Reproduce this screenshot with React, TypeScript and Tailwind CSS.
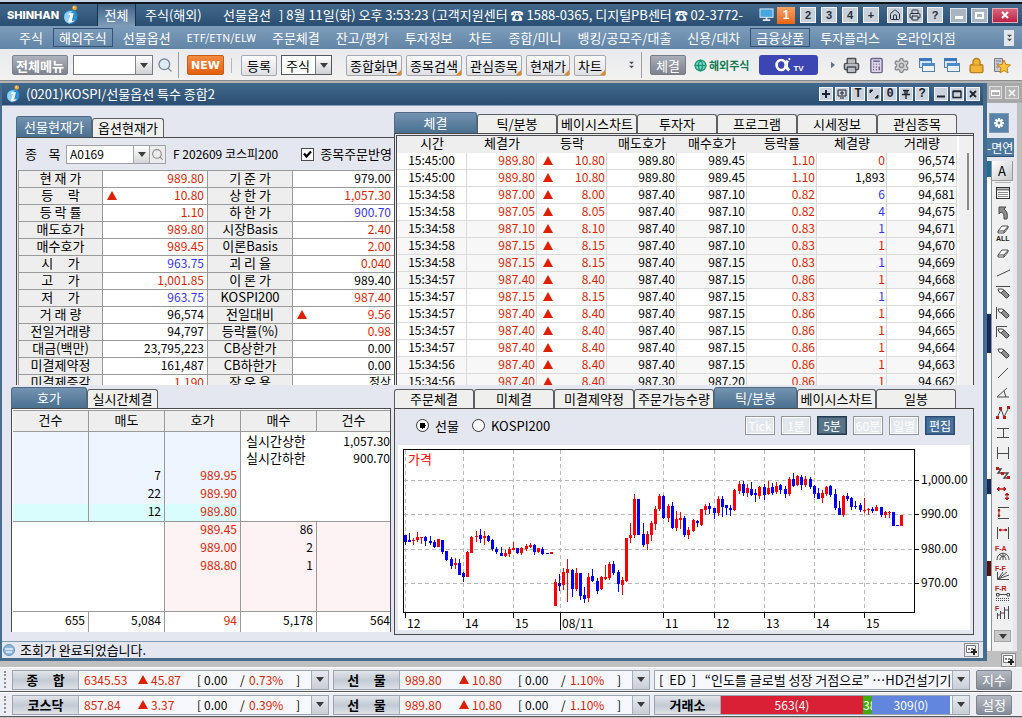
import React from 'react';
import { Printer, Home, Settings, Lock, Calculator, Search, Globe } from 'lucide-react';

type Tone = 'r' | 'b' | 'k';

const tone: Record<Tone, string> = {
  r: 'text-[#e01e00]',
  b: 'text-[#3434ff]',
  k: 'text-black',
};

/* ---------- shared pieces ---------- */

function Up({ className = '' }: { className?: string }) {
  return (
    <svg viewBox="0 0 10 9" className={`h-[9px] w-[10px] shrink-0 ${className}`} aria-hidden="true">
      <path d="M5 0 L10 9 H0 Z" fill="#e01e00" />
    </svg>
  );
}

function Caret() {
  return (
    <svg viewBox="0 0 8 5" className="h-[5px] w-[8px]" aria-hidden="true">
      <path d="M0 0H8L4 5Z" fill="#3c3c3c" />
    </svg>
  );
}

function InfoLogo({ className = '' }: { className?: string }) {
  return (
    <svg viewBox="0 0 18 22" className={`shrink-0 ${className}`} aria-hidden="true">
      <path d="M2 9C4 5 12 4 15 8C18 13 15 20 9 21C3 21 0 15 2 9Z" fill="#2d8fd0" />
      <path d="M2 10C5 6 9 6 11 7C7 10 6 15 8 21C2 20 0 15 2 10Z" fill="#8fd0f4" />
      <path d="M7 9H12L10 17C10 18 11 18 13 17C12 20 6 21 6 18L8 11L6 11Z" fill="#fff" />
      <circle cx="13" cy="3" r="2.7" fill="#eaa83c" />
      <circle cx="12.3" cy="2.3" r="1" fill="#fbe0a0" />
    </svg>
  );
}

function PanelTab({ label, active, className = '' }: { label: string; active?: boolean; className?: string }) {
  return (
    <button
      type="button"
      className={`shrink-0 whitespace-nowrap rounded-t-[3px] border border-b-0 text-center ${
        active
          ? 'h-[21px] border-[#4e6a86] bg-linear-to-b from-[#7393b0] to-[#4a7090] text-white'
          : 'h-[19px] border-[#5c5f66] bg-[#efefed] text-black'
      } ${className}`}
    >
      {label}
    </button>
  );
}

/* ---------- application header ---------- */

const titleBtn =
  'flex h-[16px] w-[16px] shrink-0 items-center justify-center border border-[#f2f4f7] bg-[#c9d0d9] font-["Liberation_Sans"] text-[11px] font-bold text-[#26303c]';

function TitleBar() {
  return (
    <header className="flex h-[24px] shrink-0 items-center border-t-2 border-[#101418] bg-linear-to-b from-[#42698b] to-[#2a4e73] pl-[7px] pr-[4px] text-white">
      <span className="w-[55px] font-['Inter'] text-[11px] font-extrabold">SHINHAN</span>
      <InfoLogo className="ml-[1px] h-[20px] w-[16px]" />
      <button
        type="button"
        className="ml-[18px] h-full w-[39px] border-l border-r border-l-[#16314e] border-r-[#16314e] bg-linear-to-b from-[#3f6285] to-[#7e9cb8]"
      >
        전체
      </button>
      <button type="button" className="ml-[9px] w-[62px] whitespace-nowrap text-left">주식(해외)</button>
      <button type="button" className="ml-[16px] w-[48px] whitespace-nowrap text-left">선물옵션</button>
      <p className="ml-[8px] min-w-0 flex-1 overflow-x-clip whitespace-nowrap">
        ] 8월 11일(화) 오후 3:53:23 (고객지원센터 ☎ 1588-0365, 디지털PB센터 ☎ 02-3772-
      </p>
      <svg viewBox="0 0 16 15" className="mr-[3px] h-[14px] w-[15px] shrink-0" aria-hidden="true">
        <rect x="1" y="1" width="14" height="9" fill="#49a5e0" stroke="#e6eef6" />
        <path d="M7 10h2v2h3v2H4v-2h3z" fill="#dfe6ee" />
      </svg>
      <div className="flex gap-[5px]">
        <button
          type="button"
          className="flex h-[17px] w-[18px] items-center justify-center bg-linear-to-b from-[#f7a15f] to-[#e8670e] font-['Liberation_Sans'] text-[12px] font-bold text-white"
        >
          1
        </button>
        {['2', '3', '4', '+'].map((n) => (
          <button key={n} type="button" className={titleBtn}>{n}</button>
        ))}
      </div>
      <div className="ml-[8px] flex gap-[4px]">
        <button type="button" className={titleBtn} aria-label="홈"><Home size={12} strokeWidth={2} /></button>
        <button type="button" className={titleBtn} aria-label="인쇄"><Printer size={12} strokeWidth={2} /></button>
        <button type="button" className={titleBtn}>?</button>
      </div>
      <div className="ml-[7px] flex gap-[4px]">
        <button type="button" aria-label="최소화" className="flex h-[15px] w-[17px] items-end justify-center border border-[#dfe4ea] bg-[#a9b5c2] pb-[3px]">
          <span className="h-[3px] w-[8px] bg-white" />
        </button>
        <button type="button" aria-label="최대화" className="flex h-[15px] w-[17px] items-center justify-center border border-[#dfe4ea] bg-[#a9b5c2]">
          <span className="h-[7px] w-[9px] border-2 border-white" />
        </button>
        <button type="button" aria-label="닫기" className="flex h-[15px] w-[26px] items-center justify-center border border-[#e8a9b8] bg-linear-to-b from-[#d8647d] to-[#b91f45]">
          <svg viewBox="0 0 8 8" className="h-[8px] w-[8px]"><path d="M1 1L7 7M7 1L1 7" stroke="#fff" strokeWidth="2" /></svg>
        </button>
      </div>
    </header>
  );
}

const menus = ['주식', '해외주식', '선물옵션', 'ETF/ETN/ELW', '주문체결', '잔고/평가', '투자정보', '차트', '종합/미니', '뱅킹/공모주/대출', '신용/대차', '금융상품', '투자플러스', '온라인지점'];

function DoubleChevron() {
  return (
    <svg viewBox="0 0 8 12" className="h-[10px] w-[7px]" aria-hidden="true">
      <path d="M1 2H7L4 5ZM1 7H7L4 10Z" fill="#4a5058" />
    </svg>
  );
}

function MenuBar() {
  return (
    <nav className="flex h-[24px] shrink-0 items-center gap-[4px] border-b border-[#e9edf2] bg-linear-to-b from-[#7d9cba] to-[#6285a6] pl-[13px] pr-[8px] text-white">
      {menus.map((m) => (
        <button
          key={m}
          type="button"
          className={`h-[19px] shrink-0 whitespace-nowrap border px-[5px] leading-[17px] ${
            m === '해외주식' || m === '금융상품' ? 'border-[#36517a]' : 'border-transparent'
          } ${m.startsWith('ETF') ? 'text-[11px]' : ''}`}
        >
          {m}
        </button>
      ))}
      <button type="button" aria-label="더보기" className="ml-auto flex h-[16px] w-[10px] items-center justify-center bg-[#e3e6ea]">
        <DoubleChevron />
      </button>
    </nav>
  );
}

const toolBtn =
  'relative h-[21px] shrink-0 whitespace-nowrap rounded-[2px] border border-[#a5a7ad] bg-linear-to-b from-[#fbfbfc] to-[#dfe0e4] text-center leading-[17px] text-black';

function CornerMark() {
  return (
    <svg viewBox="0 0 5 5" className="absolute bottom-0 right-0 h-[5px] w-[5px]" aria-hidden="true">
      <path d="M5 0V5H0Z" fill="#e88a10" />
    </svg>
  );
}

function WindowsIcon() {
  return (
    <svg viewBox="0 0 17 16" className="h-[16px] w-[17px] shrink-0" aria-hidden="true">
      <rect x="1.500" y="1.500" width="12" height="9" fill="#d6e4f2" stroke="#5b7ea3" />
      <rect x="1" y="1" width="13" height="3" fill="#3f78b5" />
      <rect x="4.500" y="6.500" width="12" height="8" fill="#eaf1f8" stroke="#5b7ea3" />
      <rect x="4" y="6" width="13" height="3" fill="#4c8ac8" />
    </svg>
  );
}

function FavoriteIcon() {
  return (
    <svg viewBox="0 0 18 17" className="h-[17px] w-[18px] shrink-0" aria-hidden="true">
      <path d="M1.500 1.500H9.500V14.500H1.500Z" fill="#c9cbd0" stroke="#7b7e86" />
      <path d="M3 4H8M3 7H6M3 10H6" stroke="#7b7e86" />
      <path d="M11 3L13 7.500L17.500 8L14 11L15 16L11 13.500L7 16L8 11L4.500 8L9 7.500Z" fill="#fbc43a" stroke="#c58318" />
    </svg>
  );
}

function Toolbar() {
  return (
    <div className="flex h-[30px] shrink-0 items-center bg-linear-to-b from-[#e9eaee] to-[#f3f2f1] pl-[12px] pr-[11px]">
      <button type="button" className="h-[20px] w-[56px] shrink-0 rounded-[2px] border border-[#7d828c] bg-linear-to-b from-[#aeb3bc] to-[#7e8490] text-[13px] font-bold leading-[17px] text-white">
        전체메뉴
      </button>
      <div className="ml-[5px] flex h-[20px] w-[80px] shrink-0 border border-[#77797e] bg-white">
        <input aria-label="화면 검색" className="w-0 flex-1 px-1 outline-none" />
        <button type="button" aria-label="최근 화면" className="flex w-[17px] items-center justify-center border-l border-[#85878c] bg-linear-to-b from-white to-[#cfd0d4]"><Caret /></button>
      </div>
      <button type="button" aria-label="검색" className="ml-[4px] shrink-0 text-[#7d8894]"><Search size={16} strokeWidth={2} fill="#dcebf5" /></button>
      <span className="ml-[5px] h-[26px] w-px shrink-0 bg-[#9b9da3]" />
      <button type="button" className="ml-[8px] h-[20px] w-[37px] shrink-0 rounded-[2px] border border-[#c65d12] bg-linear-to-b from-[#f58a3e] to-[#e4600a] font-['DejaVu_Sans'] text-[11px] font-bold leading-[17px] text-white">
        NEW
      </button>
      <span className="ml-[7px] h-[15px] w-px shrink-0 bg-[#b4b6bb]" />
      <button type="button" className={`${toolBtn} ml-[9px] w-[36px]`}>등록</button>
      <div className="relative ml-[4px] h-[20px] w-[51px] shrink-0">
        <select aria-label="등록 구분" className="h-full w-full appearance-none border border-[#55575c] bg-white pl-[4px] leading-[17px] text-black outline-none">
          <option>주식</option>
        </select>
        <span className="pointer-events-none absolute right-px top-px flex h-[18px] w-[16px] items-center justify-center border-l border-[#77797e] bg-linear-to-b from-white to-[#cfd0d4]"><Caret /></span>
      </div>
      <div className="ml-[14px] flex shrink-0 gap-[4px]">
        <button type="button" className={`${toolBtn} w-[56px]`}>종합화면<CornerMark /></button>
        <button type="button" className={`${toolBtn} w-[56px]`}>종목검색<CornerMark /></button>
        <button type="button" className={`${toolBtn} w-[56px]`}>관심종목<CornerMark /></button>
        <button type="button" className={`${toolBtn} w-[44px]`}>현재가<CornerMark /></button>
        <button type="button" className={`${toolBtn} w-[32px]`}>차트<CornerMark /></button>
      </div>
      <button type="button" aria-label="도구 더보기" className="ml-[22px] shrink-0"><DoubleChevron /></button>
      <span className="ml-[6px] h-[26px] w-px shrink-0 bg-[#9b9da3]" />
      <button type="button" className="ml-[8px] h-[20px] w-[36px] shrink-0 rounded-[2px] border border-[#767b85] bg-linear-to-b from-[#a9aeb8] to-[#7c828e] leading-[17px] text-white">체결</button>
      <a href="#overseas" className="ml-[8px] flex w-[56px] shrink-0 items-center gap-[2px] whitespace-nowrap text-[#117a50]">
        <Globe size={13} strokeWidth={2.4} fill="#7fd0e8" className="shrink-0 text-[#1c9a63]" />
        <span className="text-[11px] font-bold">해외주식</span>
      </a>
      <a href="#tv" className="ml-[9px] flex h-[20px] w-[59px] shrink-0 items-center justify-center rounded-[3px] bg-[#3c45b4] text-white">
        <svg viewBox="0 0 22 16" className="h-[16px] w-[20px]" aria-hidden="true">
          <ellipse cx="9" cy="8" rx="5" ry="5.500" fill="none" stroke="#fff" strokeWidth="3" />
          <path d="M16 3C14 8 15 12 18 14" fill="none" stroke="#fff" strokeWidth="3" />
          <circle cx="18" cy="1.500" r="1.200" fill="#fff" />
        </svg>
        <span className="self-end pb-[2px] font-['Liberation_Sans'] text-[8px] font-bold leading-none">TV</span>
      </a>
      <svg viewBox="0 0 5 8" className="ml-[13px] h-[8px] w-[4px] shrink-0" aria-hidden="true"><path d="M0 0L5 4L0 8Z" fill="#5f6f85" /></svg>
      <div className="ml-auto flex shrink-0 items-center gap-[8px] pl-[7px]">
        <Printer size={17} fill="#b7bcc2" className="text-[#4b4f55]" />
        <Calculator size={17} fill="#ddd3ea" className="text-[#6d6788]" />
        <Settings size={17} fill="#d0d1d3" className="text-[#8c8d90]" />
        <WindowsIcon />
        <WindowsIcon />
        <Lock size={17} fill="#f0b437" className="text-[#b98217]" />
        <FavoriteIcon />
      </div>
    </div>
  );
}

/* ---------- current price panel ---------- */

type Info = [string, string, Tone, string, string, Tone];

const info: Info[] = [
  ['현 재 가', '989.80', 'r', '기 준 가', '979.00', 'k'],
  ['등     락', '10.80', 'r', '상 한 가', '1,057.30', 'r'],
  ['등 락 률', '1.10', 'r', '하 한 가', '900.70', 'b'],
  ['매도호가', '989.80', 'r', '시장Basis', '2.40', 'r'],
  ['매수호가', '989.45', 'r', '이론Basis', '2.00', 'r'],
  ['시     가', '963.75', 'b', '괴 리 율', '0.040', 'r'],
  ['고     가', '1,001.85', 'r', '이 론 가', '989.40', 'k'],
  ['저     가', '963.75', 'b', 'KOSPI200', '987.40', 'r'],
  ['거 래 량', '96,574', 'k', '전일대비', '9.56', 'r'],
  ['전일거래량', '94,797', 'k', '등락률(%)', '0.98', 'r'],
  ['대금(백만)', '23,795,223', 'k', 'CB상한가', '0.00', 'k'],
  ['미결제약정', '161,487', 'k', 'CB하한가', '0.00', 'k'],
  ['미결제증감', '1,190', 'r', '장 운 용', '정상', 'k'],
];

const infoLabel = 'h-[17px] whitespace-pre border-b border-r border-[#9a9a9a] bg-[#eeeeee] p-0 text-center align-top font-normal';
const infoValue = 'h-[17px] border-b border-r border-[#9a9a9a] bg-white p-0 pr-[3px] align-top text-[12px]';

function ValueCell({ value, color, mark, last }: { value: string; color: Tone; mark?: boolean; last?: boolean }) {
  return (
    <td className={last ? `${infoValue} border-r-0 pr-0` : infoValue}>
      <div className={`flex items-center justify-end ${tone[color]}`}>
        {mark && <Up className="ml-[4px] mr-auto" />}
        {value}
      </div>
    </td>
  );
}

function PricePanel() {
  return (
    <section className="ml-[14px]">
      <div className="flex h-[21px] items-end">
        <PanelTab label="선물현재가" active className="w-[76px]" />
        <PanelTab label="옵션현재가" className="w-[72px]" />
      </div>
      <div className="border-l border-t border-[#4a4a4a] pl-px">
        <form className="flex h-[32px] items-center pl-[7px]">
          <label htmlFor="code" className="w-[41px] whitespace-pre">종    목</label>
          <div className="flex h-[19px] w-[100px] shrink-0 border border-[#a0a2a8] bg-white">
            <input id="code" defaultValue="A0169" className="w-0 flex-1 px-[3px] text-[12px] text-black outline-none" />
            <button type="button" aria-label="종목 목록" className="flex w-[16px] items-center justify-center border-l border-[#a0a2a8] bg-linear-to-b from-white to-[#d3d4d8]"><Caret /></button>
            <button type="button" aria-label="종목 찾기" className="flex w-[16px] items-center justify-center border-l border-[#a0a2a8] bg-[#ececec] text-[#8a8a8a]"><Search size={13} /></button>
          </div>
          <span className="ml-[7px] flex-1 whitespace-nowrap text-[12px]">F 202609 코스피200</span>
          <label className="flex shrink-0 items-center gap-[6px] whitespace-nowrap pr-[2px]">
            <span className="relative flex h-[13px] w-[13px]">
              <input type="checkbox" defaultChecked className="peer h-[13px] w-[13px] appearance-none border border-[#4a4a4a] bg-white" />
              <svg viewBox="0 0 9 9" className="pointer-events-none absolute left-[2px] top-[2px] hidden h-[9px] w-[9px] peer-checked:block" aria-hidden="true">
                <path d="M1 3.500L3.500 6.500L8 1.500" fill="none" stroke="#000" strokeWidth="2.200" />
              </svg>
            </span>
            종목주문반영
          </label>
        </form>
        <div className="h-[215px] overflow-hidden">
          <table className="w-full table-fixed border-separate border-spacing-0 border-l border-t border-[#9a9a9a] leading-[14px]">
            <colgroup>
              <col className="w-[84px]" />
              <col className="w-[105px]" />
              <col className="w-[85px]" />
              <col />
            </colgroup>
            <tbody>
              {info.map((r, i) => (
                <tr key={r[0]}>
                  <th scope="row" className={infoLabel}>{r[0]}</th>
                  <ValueCell value={r[1]} color={r[2]} mark={i === 1} />
                  <th scope="row" className={infoLabel}>{r[3]}</th>
                  <ValueCell value={r[4]} color={r[5]} mark={i === 8} last />
                </tr>
              ))}
            </tbody>
          </table>
        </div>
      </div>
    </section>
  );
}

/* ---------- order book ---------- */

const asks: [string, string][] = [['', ''], ['', ''], ['7', '989.95'], ['22', '989.90'], ['12', '989.80']];
const bids: [string, string][] = [['989.45', '86'], ['989.00', '2'], ['988.80', '1'], ['', ''], ['', '']];

function OrderBook() {
  const line = 'border-[#9a9a9a]';
  return (
    <section className="ml-[9px] mr-[3px]">
      <div className="flex h-[21px] items-end">
        <PanelTab label="호가" active className="w-[76px]" />
        <PanelTab label="실시간체결" className="w-[71px]" />
      </div>
      <div className="border-l border-r border-t border-[#4a4a4a] bg-white pl-px pt-px">
        <table className="w-full table-fixed border-separate border-spacing-0 text-[12px] leading-[14px]">
          <colgroup>
            <col className="w-[76px]" /><col className="w-[76px]" /><col className="w-[76px]" /><col className="w-[76px]" /><col />
          </colgroup>
          <thead>
            <tr>
              {['건수', '매도', '호가', '매수', '건수'].map((h, i) => (
                <th key={i} className={`h-[22px] border-b border-t ${line} bg-[#eeeeee] p-0 pb-[3px] text-[13px] font-normal ${i < 4 ? 'border-r' : ''}`}>{h}</th>
              ))}
            </tr>
          </thead>
          <tbody className="align-top">
            {asks.map(([qty, price], i) => {
              const bg = i === 4 ? 'bg-[#d9fcfc] border-b' : 'bg-[#edf5ff]';
              return (
                <tr key={`a${i}`}>
                  <td className={`h-[18px] border-r ${line} ${bg} p-0`} />
                  <td className={`border-r ${line} ${bg} p-0 pr-[3px] text-right`}>{qty}</td>
                  <td className={`border-r ${line} ${bg} p-0 pr-[3px] text-right text-[#e01e00]`}>{price}</td>
                  {i === 0 && (
                    <td colSpan={2} rowSpan={5} className={`border-b ${line} bg-white p-0 pl-[5px] pt-[2px]`}>
                      <dl className="grid grid-cols-[auto_auto] justify-between gap-y-[3px]">
                        <dt className="text-[13px]">실시간상한</dt><dd className="text-right">1,057.30</dd>
                        <dt className="text-[13px]">실시간하한</dt><dd className="text-right">900.70</dd>
                      </dl>
                    </td>
                  )}
                </tr>
              );
            })}
            {bids.map(([price, qty], i) => {
              const bg = i === 4 ? 'bg-[#fdf2f4] border-b' : 'bg-[#fdf2f4]';
              return (
                <tr key={`b${i}`}>
                  {i === 0 && <td colSpan={2} rowSpan={5} className={`border-b border-r ${line} bg-white p-0`} />}
                  <td className={`h-[18px] border-r ${line} ${bg} p-0 pr-[3px] text-right text-[#e01e00]`}>{price}</td>
                  <td className={`border-r ${line} ${bg} p-0 pr-[3px] text-right`}>{qty}</td>
                  <td className={`${line} ${bg} p-0`} />
                </tr>
              );
            })}
            <tr>
              {['655', '5,084', '94', '5,178', '564'].map((v, i) => (
                <td key={v} className={`h-[20px] ${line} p-0 pt-px text-right ${i < 4 ? 'border-r pr-[3px]' : ''} ${i === 2 ? 'text-[#e01e00]' : ''}`}>{v}</td>
              ))}
            </tr>
          </tbody>
        </table>
      </div>
    </section>
  );
}

/* ---------- execution list ---------- */

type Trade = [string, string, string, string, string, string, string, Tone, string];

const trades: Trade[] = [
  ['15:45:00', '989.80', '10.80', '989.80', '989.45', '1.10', '0', 'r', '96,574'],
  ['15:45:00', '989.80', '10.80', '989.80', '989.45', '1.10', '1,893', 'k', '96,574'],
  ['15:34:58', '987.00', '8.00', '987.40', '987.10', '0.82', '6', 'b', '94,681'],
  ['15:34:58', '987.05', '8.05', '987.40', '987.10', '0.82', '4', 'b', '94,675'],
  ['15:34:58', '987.10', '8.10', '987.40', '987.10', '0.83', '1', 'b', '94,671'],
  ['15:34:58', '987.15', '8.15', '987.40', '987.10', '0.83', '1', 'r', '94,670'],
  ['15:34:58', '987.15', '8.15', '987.40', '987.15', '0.83', '1', 'b', '94,669'],
  ['15:34:57', '987.40', '8.40', '987.40', '987.15', '0.86', '1', 'r', '94,668'],
  ['15:34:57', '987.15', '8.15', '987.40', '987.15', '0.83', '1', 'b', '94,667'],
  ['15:34:57', '987.40', '8.40', '987.40', '987.15', '0.86', '1', 'r', '94,666'],
  ['15:34:57', '987.40', '8.40', '987.40', '987.15', '0.86', '1', 'r', '94,665'],
  ['15:34:57', '987.40', '8.40', '987.40', '987.15', '0.86', '1', 'r', '94,664'],
  ['15:34:56', '987.40', '8.40', '987.40', '987.15', '0.86', '1', 'r', '94,663'],
  ['15:34:56', '987.40', '8.40', '987.30', '987.20', '0.86', '1', 'r', '94,662'],
];

const upperTabs = ['틱/분봉', '베이시스차트', '투자자', '프로그램', '시세정보', '관심종목'];

function TradePanel() {
  const base = 'h-[17px] border-b border-r border-[#dadada] p-0 align-top';
  const cell = `${base} pr-px text-right`;
  return (
    <section>
      <div className="flex h-[21px] items-end">
        <PanelTab label="체결" active className="w-[83px]" />
        {upperTabs.map((t) => (
          <PanelTab key={t} label={t} className="w-[80px]" />
        ))}
      </div>
      <div className="border-l border-r border-t border-[#4a4a4a] pl-px pt-px">
        <div className="flex h-[250px] overflow-hidden border-l border-t border-[#4a4a4a] bg-[#f0f0f0]">
          <div className="min-w-0 flex-1">
            <table className="w-full table-fixed border-separate border-spacing-0 text-[12px] leading-[14px]">
              <thead>
                <tr>
                  {['시간', '체결가', '등락', '매도호가', '매수호가', '등락률', '체결량', '거래량'].map((h) => (
                    <th key={h} className="h-[17px] bg-[#eeeeee] p-0 align-top text-[13px] font-normal">{h}</th>
                  ))}
                </tr>
              </thead>
              <tbody>
                {trades.map((t, i) => (
                  <tr key={i} className={Math.floor(i / 4) % 2 === 0 ? 'bg-white' : 'bg-[#f7f7f7]'}>
                    <td className={`${base} text-center`}>{t[0]}</td>
                    <td className={`${cell} text-[#e01e00]`}>{t[1]}</td>
                    <td className={cell}>
                      <div className="flex items-center justify-between pl-[6px] text-[#e01e00]"><Up />{t[2]}</div>
                    </td>
                    <td className={cell}>{t[3]}</td>
                    <td className={cell}>{t[4]}</td>
                    <td className={`${cell} text-[#e01e00]`}>{t[5]}</td>
                    <td className={`${cell} ${tone[t[7]]}`}>{t[6]}</td>
                    <td className={cell}>{t[8]}</td>
                  </tr>
                ))}
              </tbody>
            </table>
          </div>
          <div className="flex w-[16px] shrink-0 justify-end border-l-2 border-white pr-[4px] pt-[17px]">
            <span className="h-[57px] w-[2px] bg-[#8a8a8a]" />
          </div>
        </div>
      </div>
    </section>
  );
}

/* ---------- candle chart ---------- */

// [x, high, bodyTop, bodyBottom, low, rising] on a grid three times finer than a pixel
type Candle = [number, number, number, number, number, 0 | 1];

const candles: Candle[] = [
  [22, 270, 270, 290, 300, 0], [34, 264, 285, 291, 291, 0], [46, 280, 285, 289, 300, 1], [58, 261, 276, 285, 291, 1],
  [70, 276, 276, 279, 297, 1], [82, 273, 276, 288, 303, 0], [97, 273, 288, 294, 300, 0], [109, 285, 291, 306, 309, 0],
  [121, 282, 282, 306, 306, 1], [133, 285, 285, 321, 327, 0], [145, 318, 318, 345, 348, 0], [160, 336, 342, 363, 372, 0],
  [172, 339, 354, 360, 372, 1], [184, 342, 354, 390, 390, 0], [196, 380, 384, 396, 411, 0], [208, 318, 321, 396, 396, 1],
  [220, 273, 276, 324, 324, 1], [235, 258, 273, 276, 291, 1], [247, 252, 270, 282, 294, 0], [259, 258, 273, 279, 300, 1],
  [271, 270, 273, 288, 291, 0], [283, 282, 285, 312, 318, 0], [295, 306, 312, 321, 327, 0], [310, 306, 324, 333, 333, 0],
  [322, 315, 324, 333, 336, 1], [334, 306, 312, 327, 336, 1], [346, 291, 309, 315, 315, 1], [358, 309, 309, 324, 327, 0],
  [370, 306, 309, 324, 330, 1], [385, 297, 303, 312, 318, 1], [397, 294, 300, 306, 309, 1], [409, 297, 300, 321, 330, 0],
  [421, 309, 309, 321, 324, 1], [433, 306, 312, 327, 330, 0], [448, 324, 324, 327, 327, 0], [460, 321, 321, 327, 327, 1],
  [472, 402, 411, 483, 483, 1], [484, 387, 414, 423, 438, 0], [496, 369, 381, 420, 435, 1], [508, 342, 372, 384, 471, 1],
  [523, 372, 375, 432, 456, 0], [535, 370, 384, 432, 438, 1], [547, 384, 384, 453, 465, 0], [559, 426, 450, 462, 474, 0],
  [571, 384, 396, 459, 471, 1], [583, 372, 393, 408, 411, 0], [598, 399, 408, 438, 447, 0], [610, 393, 396, 432, 435, 1],
  [622, 360, 396, 402, 405, 1], [634, 351, 357, 399, 405, 1], [646, 348, 357, 384, 390, 0], [661, 375, 381, 417, 441, 0],
  [673, 396, 405, 420, 450, 1], [685, 279, 279, 408, 411, 1], [697, 234, 270, 279, 294, 1], [709, 147, 162, 270, 279, 1],
  [721, 162, 162, 270, 270, 0], [736, 234, 267, 300, 306, 0], [748, 258, 267, 297, 315, 1], [760, 228, 234, 270, 288, 1],
  [772, 183, 192, 237, 255, 1], [784, 147, 153, 192, 198, 1], [796, 150, 153, 219, 222, 0], [811, 177, 183, 219, 231, 1],
  [823, 171, 183, 249, 252, 0], [835, 198, 222, 249, 258, 1], [847, 201, 219, 225, 252, 1], [859, 213, 219, 270, 276, 0],
  [871, 246, 255, 270, 282, 1], [886, 222, 225, 258, 261, 1], [898, 225, 228, 234, 246, 0], [910, 192, 192, 240, 243, 1],
  [922, 177, 183, 195, 210, 1], [934, 174, 183, 192, 207, 0], [949, 189, 189, 204, 222, 0], [961, 153, 162, 204, 213, 1],
  [973, 153, 162, 186, 216, 0], [985, 180, 180, 189, 210, 0], [997, 180, 189, 195, 213, 0], [1009, 132, 135, 195, 198, 1],
  [1024, 108, 117, 138, 147, 1], [1036, 108, 117, 144, 153, 0], [1048, 117, 129, 144, 156, 1], [1060, 111, 132, 150, 153, 0],
  [1072, 132, 144, 150, 171, 0], [1084, 123, 126, 153, 162, 1], [1099, 117, 126, 150, 165, 0], [1111, 108, 129, 147, 150, 1],
  [1123, 114, 126, 144, 150, 0], [1135, 111, 123, 141, 147, 1], [1147, 117, 120, 135, 147, 0], [1162, 123, 132, 147, 159, 0],
  [1174, 96, 102, 147, 153, 1], [1186, 84, 102, 123, 126, 0], [1198, 90, 93, 120, 123, 1], [1210, 90, 96, 120, 135, 0],
  [1222, 93, 102, 120, 126, 1], [1237, 96, 102, 126, 132, 0], [1249, 120, 123, 147, 159, 0], [1261, 129, 144, 162, 162, 0],
  [1273, 135, 144, 159, 174, 1], [1285, 123, 126, 147, 153, 1], [1297, 120, 123, 150, 156, 0], [1312, 132, 147, 189, 195, 0],
  [1324, 168, 189, 210, 210, 0], [1336, 150, 153, 210, 216, 1], [1348, 144, 153, 162, 168, 0], [1360, 156, 159, 186, 195, 0],
  [1372, 168, 183, 186, 192, 0], [1387, 174, 180, 195, 201, 0], [1399, 159, 195, 198, 204, 1], [1411, 189, 192, 195, 210, 1],
  [1423, 186, 192, 198, 204, 0], [1435, 180, 186, 198, 198, 1], [1450, 186, 186, 210, 216, 0], [1462, 198, 201, 210, 219, 1],
  [1474, 198, 201, 204, 219, 1], [1486, 201, 201, 243, 243, 0], [1498, 240, 240, 243, 243, 0], [1510, 210, 210, 243, 243, 1],
];

const priceTicks: [number, string][] = [[35, '1,000.00'], [69, '990.00'], [104, '980.00'], [138, '970.00']];
const timeTicks: [number, string][] = [[7, '12'], [65, '14'], [115, '15'], [162, '08/11'], [265, '11'], [316, '12'], [366, '13'], [416, '14'], [466, '15']];

function CandleChart() {
  return (
    <svg viewBox="0 0 571 185" className="block h-[185px] w-[571px] text-[12px]" role="img" aria-label="가격 5분봉 차트">
      <g shapeRendering="crispEdges">
        {priceTicks.map(([y]) => (
          <g key={y}>
            <path d={`M6 ${y + 0.5}H516`} stroke="#b8b8b8" strokeDasharray="4 3" />
            <path d={`M517 ${y + 0.5}H521`} stroke="#000" />
          </g>
        ))}
        {timeTicks.map(([x, label]) => (
          <g key={x}>
            <path d={`M${x + 0.5} 5V167`} stroke="#b8b8b8" strokeDasharray="4 3" />
            <path d={`M${x + 0.5} 168V${label === '08/11' ? 185 : 173}`} stroke="#000" />
          </g>
        ))}
        {candles.map(([x, hi, top, bottom, lo, up]) => {
          const col = Math.floor(x / 3);
          const y1 = Math.round(top / 3);
          const w1 = Math.round(hi / 3);
          return (
            <g key={x} fill={up ? '#ff0000' : '#0000ff'}>
              <rect x={col} y={w1} width={1} height={Math.max(1, Math.round(lo / 3) - w1)} />
              <rect x={col - 1} y={y1} width={3} height={Math.max(1, Math.round(bottom / 3) - y1)} />
            </g>
          );
        })}
        <rect x="5.500" y="4.500" width="511" height="163" fill="none" stroke="#000" />
      </g>
      <text x="10" y="19" fill="#ff0000" className="text-[13px]">가격</text>
      {priceTicks.map(([y, label]) => <text key={y} x="523" y={y + 4}>{label}</text>)}
      {timeTicks.map(([x, label]) => <text key={x} x={x + 2} y="183">{label}</text>)}
    </svg>
  );
}

const intervals: [string, 'off' | 'on' | 'edit'][] = [['Tick', 'off'], ['1분', 'off'], ['5분', 'on'], ['60분', 'off'], ['일별', 'off'], ['편집', 'edit']];
const intervalStyle = {
  off: 'border-[#92959b] bg-[#e2e6ed] text-white shadow-[inset_0_0_0_1px_#fff]',
  on: 'border-[#243c50] bg-[#587486] text-white shadow-[inset_0_0_0_1px_#3c5668]',
  edit: 'border-[#2b4a72] bg-[#477199] text-white shadow-[inset_0_0_0_1px_#3a6088]',
};

function Radio({ label, checked }: { label: string; checked?: boolean }) {
  return (
    <label className="flex items-center gap-[6px]">
      <input
        type="radio"
        name="underlying"
        defaultChecked={checked}
        className="h-[13px] w-[13px] appearance-none rounded-full border border-[#333] bg-white checked:bg-[radial-gradient(circle,#000_0_3px,#fff_3px)]"
      />
      {label}
    </label>
  );
}

function ChartPanel() {
  return (
    <section>
      <div className="flex h-[21px] items-end">
        {['주문체결', '미체결', '미결제약정', '주문가능수량'].map((t) => (
          <PanelTab key={t} label={t} className="w-[80px]" />
        ))}
        <PanelTab label="틱/분봉" active className="w-[83px]" />
        <PanelTab label="베이시스차트" className="w-[79px]" />
        <PanelTab label="일봉" className="w-[80px]" />
      </div>
      <div className="border border-[#4a4a4a] px-[3px] pb-[4px]">
        <div className="flex h-[36px] items-center pb-[3px] pr-[15px]">
          <fieldset className="ml-[18px] flex flex-1 gap-[13px]">
            <Radio label="선물" checked />
            <Radio label="KOSPI200" />
          </fieldset>
          <div className="flex gap-[6px]">
            {intervals.map(([t, s]) => (
              <button key={t} type="button" className={`h-[19px] w-[30px] whitespace-nowrap border text-[12px] leading-[16px] ${intervalStyle[s]}`}>{t}</button>
            ))}
          </div>
        </div>
        <div className="bg-white">
          <CandleChart />
        </div>
      </div>
    </section>
  );
}

/* ---------- child window ---------- */

const winBtn =
  'flex h-[14px] w-[14px] shrink-0 items-center justify-center border border-[#f2f4f7] bg-[#cdd3dc] font-["Liberation_Mono"] text-[12px] font-bold leading-none text-[#1c242e]';

function Glyph({ d, fill = 'none', w = 1.4 }: { d: string; fill?: string; w?: number }) {
  return (
    <svg viewBox="0 0 10 10" className="h-[10px] w-[10px]" aria-hidden="true">
      <path d={d} fill={fill} stroke="currentColor" strokeWidth={w} />
    </svg>
  );
}

function WindowTitle() {
  return (
    <div className="flex h-[23px] items-center border-b border-[#86a0ba] bg-linear-to-b from-[#42698b] to-[#2a4e73] pl-[4px] pr-[3px] text-white">
      <InfoLogo className="h-[18px] w-[15px]" />
      <h1 className="ml-[5px] flex-1 whitespace-nowrap">(0201)KOSPI/선물옵션 특수 종합2</h1>
      <div className="flex gap-[2px]">
        <button type="button" aria-label="추가" className={winBtn}><Glyph d="M5 1V9M1 5H9" w={2} /></button>
        <button type="button" aria-label="화면 추가" className={winBtn}><Glyph d="M1 1H9V7H1ZM5 2V6M3 4H7M3 9H7" w={1} /></button>
        <button type="button" className={winBtn}>T</button>
        <button type="button" aria-label="크기 조절" className={winBtn}><Glyph d="M1 4V1H4ZM9 6V9H6Z" fill="currentColor" w={1} /></button>
        <button type="button" className={winBtn}>0</button>
        <button type="button" aria-label="고정" className={winBtn}><Glyph d="M2 1.500H8M4 2V5M6 2V5M1 5.500H9M5 6V10" w={1.4} /></button>
        <button type="button" className={winBtn}>?</button>
      </div>
      <div className="ml-[5px] flex gap-[2px]">
        <button type="button" aria-label="창 최소화" className={winBtn}><Glyph d="M1 7.500H9" w={2} /></button>
        <button type="button" aria-label="창 최대화" className={winBtn}><Glyph d="M1 2.500H9V8.500H1ZM1 2H9" w={1.4} /></button>
        <button type="button" aria-label="창 닫기" className={winBtn}><Glyph d="M2 2L8 8M8 2L2 8" w={1.8} /></button>
      </div>
    </div>
  );
}

function AddPane() {
  return (
    <button type="button" aria-label="화면 분할" className="flex h-[14px] w-[15px] items-center justify-center border border-[#8c8c8c] bg-[#ececec]">
      <svg viewBox="0 0 11 10" className="h-[10px] w-[11px]">
        <path d="M.500 .500H9.500V7.500H.500Z" fill="#fff" stroke="#777" />
        <path d="M2 4H4M5 4H7" stroke="#555" strokeWidth="1.500" />
        <path d="M8 4V10M5 7H11" stroke="#222" strokeWidth="2" />
      </svg>
    </button>
  );
}

function MainWindow() {
  return (
    <div className="min-w-0 flex-1 border-b-[3px] border-l-2 border-r-4 border-[#466c8e] bg-[#e4e7ef]">
      <WindowTitle />
      <main className="flex">
        <div className="w-[392px] shrink-0 pt-[10px]">
          <PricePanel />
          <div className="h-[2px]" />
          <OrderBook />
        </div>
        <div className="min-w-0 flex-1 pb-[6px] pr-[9px] pt-[6px]">
          <TradePanel />
          <div className="h-[2px]" />
          <ChartPanel />
        </div>
      </main>
      <footer className="flex h-[17px] items-center border-t border-[#7f9ab4] pl-[1px] pr-[4px]">
        <svg viewBox="0 0 12 12" className="h-[12px] w-[12px]" aria-hidden="true">
          <circle cx="6" cy="6" r="5.500" fill="#8fb6de" stroke="#6f92b5" />
          <path d="M2 5H10M3 8H9" stroke="#e6f1fb" strokeWidth="1.500" />
        </svg>
        <p className="ml-[5px] flex-1 leading-[14px]">조회가 완료되었습니다.</p>
        <AddPane />
      </footer>
    </div>
  );
}

/* ---------- drawing tool rail ---------- */

const dark = '#4a4a4a';
const red = '#c01818';

function Pencil({ children }: { children?: React.ReactNode }) {
  return (
    <>
      <path d="M6 8L9 5L14 10V11L12 13H11Z" fill="#8c8c8c" stroke={dark} />
      <path d="M3 4L7 4L9 5L6 8L4 7Z" fill="#f4f4f4" stroke={dark} />
      {children}
    </>
  );
}

const tools: React.ReactNode[] = [
  <g key="list"><rect x="1.500" y="2.500" width="13" height="11" fill="#fff" stroke="#333" /><path d="M2 4.500H14" stroke="#777" strokeWidth="2" /><path d="M3 7.500H13M3 9.500H13M3 11.500H13" stroke="#888" /></g>,
  <path key="undo" d="M4 2V9L6 7C9 8 9 10 9 14H12C13 9 12 6 9 4L11 2Z" fill="#8c8c8c" stroke={dark} />,
  <g key="all"><path d="M3 6L7 1H13L13 3L9 8H3ZM3 6H9L13 1.500M9 6V8" fill="#fff" stroke={dark} /><text x="1" y="16" fontSize="7" fontWeight="bold" fill="#222">ALL</text></g>,
  <path key="erase" d="M3 10L7 5H13V7L9 12H3ZM3 10H9L13 5.500M9 10V12" fill="#fff" stroke={dark} />,
  <path key="line" d="M2 11L15 5" stroke={dark} />,
  <Pencil key="p1"><path d="M1 1.500H15" stroke={dark} /></Pencil>,
  <Pencil key="p2"><path d="M1.500 2V14" stroke={dark} /></Pencil>,
  <Pencil key="p3"><path d="M1.500 12V1.500H12" stroke={dark} /></Pencil>,
  <Pencil key="p4" />,
  <path key="line2" d="M3 13L13 3" stroke={dark} />,
  <path key="angle" d="M12 3L2 12H14M9 6L11 12" fill="none" stroke={dark} />,
  <g key="n"><path d="M2 13L6 4L9 12L14 2" fill="none" stroke={dark} /><path d="M1 11H4V14H1ZM4 2H7V5H4ZM8 11H11V14H8ZM12 1H15V4H12Z" fill={red} /></g>,
  <path key="I" d="M2 3.500H14M2 12.500H14M8.500 3V12" stroke={dark} />,
  <path key="H" d="M2.500 2V14M13.500 2V14M3 8.500H13" stroke={dark} />,
  <g key="z"><path d="M2 4H6L3 8H7M8 8H13L9 13H14" fill="none" stroke={dark} strokeWidth="1.400" /><path d="M1 2H4V5H1ZM6 7H9V10H6ZM12 11H15V14H12Z" fill={red} /></g>,
  <g key="arr" stroke={red} fill={red}><path d="M2 4H11" strokeWidth="1.500" /><path d="M4 2L2 4L4 6ZM9 2L11 4L9 6ZM12 8V14M10 10L12 8L14 10ZM10 13L12 15L14 13Z" /></g>,
  <g key="v"><path d="M3 2.500H14M3 13.500H14" stroke={dark} /><path d="M4 4V12M3 6L4 4L5 6ZM3 10L4 12L5 10Z" fill={red} stroke={red} /></g>,
  <g key="h"><path d="M2.500 2V14M13.500 2V14" stroke={dark} /><path d="M4 5H12M6 4L4 5L6 6ZM10 4L12 5L10 6Z" fill={red} stroke={red} /></g>,
  <g key="fa"><text x="0" y="6" fontSize="7" fontWeight="bold" fill={red}>F-A</text><path d="M2 15C2 6 14 6 14 15M5 15C5 10 11 10 11 15M8 8V15M8 12L4 9M8 12L12 9" fill="none" stroke={dark} /></g>,
  <g key="ff"><text x="0" y="6" fontSize="7" fontWeight="bold" fill={red}>F-F</text><path d="M2.500 7V14.500H14M3 14L12 7M3 14L14 10M3 14L8 7" fill="none" stroke={dark} /></g>,
  <g key="fr"><text x="0" y="6" fontSize="7" fontWeight="bold" fill={red}>F-R</text><path d="M3 9.500H13" stroke={dark} /><path d="M1.500 8.500H4V11H1.500ZM12 8.500H14.500V11H12Z" fill="#fff" stroke={dark} /><path d="M1 13.500H15M1 15.500H15" stroke={dark} strokeDasharray="1 1" /></g>,
  <g key="f"><text x="0" y="6" fontSize="7" fontWeight="bold" fill={red}>F</text><path d="M2.500 8V14M5.500 6V14M9.500 2V14M13.500 1V14M2 10H5M6 8H9M10 5H13" stroke={dark} /></g>,
];

function ToolRail() {
  return (
    <aside className="flex w-[35px] shrink-0 flex-col bg-[#c0c0c0]">
      <div className="flex h-[20px] gap-[3px] bg-[#a8a8a8] pl-[2px] pt-[3px]">
        <button type="button" aria-label="뒤 창 최대화" className="flex h-[13px] w-[13px] items-center justify-center border border-[#ddd] bg-[#b4b4b4]">
          <span className="h-[6px] w-[9px] border border-t-2 border-white" />
        </button>
        <button type="button" aria-label="뒤 창 닫기" className="flex h-[13px] w-[14px] items-center justify-center border border-[#ddd] bg-[#b4b4b4] text-white">
          <Glyph d="M2 2L8 8M8 2L2 8" w={1.6} />
        </button>
      </div>
      <div className="mr-[5px] flex flex-1 flex-col bg-[#e4e7ef]">
        <button type="button" aria-label="설정" className="ml-[2px] mt-[10px] flex h-[20px] w-[20px] items-center justify-center border border-[#7f9ab6] bg-[#5a84a9]">
          <svg viewBox="0 0 12 12" className="h-[12px] w-[12px]" aria-hidden="true">
            <path d="M6 1V11M1 6H11M2.500 2.500L9.500 9.500M9.500 2.500L2.500 9.500" stroke="#fff" strokeWidth="2.200" />
            <circle cx="6" cy="6" r="3.600" fill="#fff" />
            <circle cx="6" cy="6" r="1.400" fill="#5a84a9" />
          </svg>
        </button>
        <button type="button" className="mr-[3px] mt-[5px] h-[19px] whitespace-nowrap border-b border-[#2f4f78] bg-[#4c779d] text-left text-[12px] leading-[17px] text-white">-면연</button>
        <div className="mt-[4px] flex flex-1">
          <div className="flex w-[4px] flex-col bg-white">
            <span className="h-[16px] bg-[#1f6e96]" />
            <span className="mt-[137px] h-[39px] bg-[#16295a]" />
            <span className="mt-[126px] h-[15px] bg-[#16295a]" />
            <span className="mt-[67px] h-[15px] bg-[#5a1010]" />
          </div>
          <div className="flex w-[22px] flex-col items-center border-l border-[#8f9299] bg-[#f0f0f0]">
            <button type="button" className="h-[20px] w-full border-b border-r border-[#9a9a9a] bg-linear-to-br from-white to-[#c9c9c9] leading-[18px]">A</button>
            <div className="mt-px flex flex-col gap-[4px] border-t border-[#b5b5b5] pt-[2px]">
              {tools.map((t, i) => (
                <svg key={i} viewBox="0 0 16 16" fill="none" className="h-[16px] w-[16px] font-['Liberation_Sans']" aria-hidden="true">{t}</svg>
              ))}
            </div>
            <button type="button" aria-label="아래로" className="mt-[9px] flex h-[12px] w-[17px] items-center justify-center border border-[#a5a5a5] bg-[#c9c9c9]"><Caret /></button>
          </div>
        </div>
      </div>
      <div className="flex h-[16px] items-center pl-[14px] pt-[2px]"><AddPane /></div>
    </aside>
  );
}

/* ---------- index tickers ---------- */

function TickerLabel({ children }: { children: string }) {
  return (
    <span className="flex h-full w-[66px] shrink-0 items-center justify-center whitespace-pre border-r border-[#a3adb8] bg-linear-to-b from-[#e2e6eb] via-[#c3cad3] to-[#dde1e7] font-bold">
      {children}
    </span>
  );
}

function DropButton() {
  return (
    <button type="button" aria-label="지수 선택" className="flex h-full w-[17px] shrink-0 items-center justify-center border-l border-[#a3adb8] bg-linear-to-b from-[#e6e9ee] to-[#c9ced6]">
      <Caret />
    </button>
  );
}

const tickerBox = 'flex h-[20px] items-center border border-[#9aa5b1] bg-[#f6f8fe]';

function Quote({ name, price, diff, rate }: { name: string; price: string; diff: string; rate: string }) {
  return (
    <div className={`${tickerBox} w-[317px] shrink-0`}>
      <TickerLabel>{name}</TickerLabel>
      <p className="flex flex-1 items-center whitespace-nowrap pl-[5px] text-[12px]">
        <span className="w-[54px] text-[#e01e00]">{price}</span>
        <Up className="mr-[3px]" />
        <span className="w-[46px] text-[#e01e00]">{diff}</span>
        <span className="w-[7px]">[</span>
        <span className="w-[36px]">0.00</span>
        <span className="w-[9px]">/</span>
        <span className="w-[47px] text-[#e01e00]">{rate}</span>
        <span>]</span>
      </p>
      <DropButton />
    </div>
  );
}

function TickerRow({ children, action }: { children: React.ReactNode; action: string }) {
  return (
    <div className="flex h-[25px] items-center gap-[4px] border-b border-t border-b-[#5a5a5a] border-t-white bg-[#eceef3] pl-[4px] pr-[10px]">
      <span className="h-[17px] w-[4px] shrink-0 border-l-2 border-dotted border-[#8a8f98]" />
      {children}
      <button type="button" className="ml-[2px] h-[20px] w-[36px] shrink-0 rounded-[2px] border border-[#7f858e] bg-linear-to-b from-[#b4bac3] to-[#858c97] leading-[17px] text-white">{action}</button>
    </div>
  );
}

function Tickers() {
  return (
    <div className="shrink-0 pb-px">
      <TickerRow action="지수">
        <Quote name="종     합" price="6345.53" diff="45.87" rate="0.73%" />
        <Quote name="선     물" price="989.80" diff="10.80" rate="1.10%" />
        <div className={`${tickerBox} min-w-0 flex-1`}>
          <p className="min-w-0 flex-1 overflow-x-clip whitespace-pre pl-[4px]">[  ED  ]   “인도를 글로벌 성장 거점으로” …HD건설기기</p>
          <DropButton />
        </div>
      </TickerRow>
      <TickerRow action="설정">
        <Quote name="코스닥" price="857.84" diff="3.37" rate="0.39%" />
        <Quote name="선     물" price="989.80" diff="10.80" rate="1.10%" />
        <div className={`${tickerBox} min-w-0 flex-1`}>
          <TickerLabel>거래소</TickerLabel>
          <div className="flex h-full min-w-0 flex-1 pr-[2px] text-center text-[12px] leading-[17px] text-white">
            <span className="flex-[142] bg-[#d92035]">563(4)</span>
            <span className="w-[9px] overflow-x-clip bg-[#43ac0a]">38</span>
            <span className="flex-[78] bg-[#6286de]">309(0)</span>
          </div>
          <DropButton />
        </div>
      </TickerRow>
    </div>
  );
}

export default function App() {
  return (
    <div className="flex min-h-screen flex-col bg-[#c0c0c0] font-['Noto_Sans_CJK_KR',sans-serif] text-[13px] leading-[16px] text-black">
      <div className="h-[2px] shrink-0 bg-[#c3d3e4]" />
      <TitleBar />
      <MenuBar />
      <Toolbar />
      <div className="h-[3px] shrink-0 border-t border-[#8a8a8a] bg-[#b4b4b4]" />
      <div className="flex flex-1">
        <div className="flex min-w-0 flex-1 flex-col">
          <MainWindow />
          <div className="h-[6px] shrink-0" />
        </div>
        <ToolRail />
      </div>
      <Tickers />
    </div>
  );
}
